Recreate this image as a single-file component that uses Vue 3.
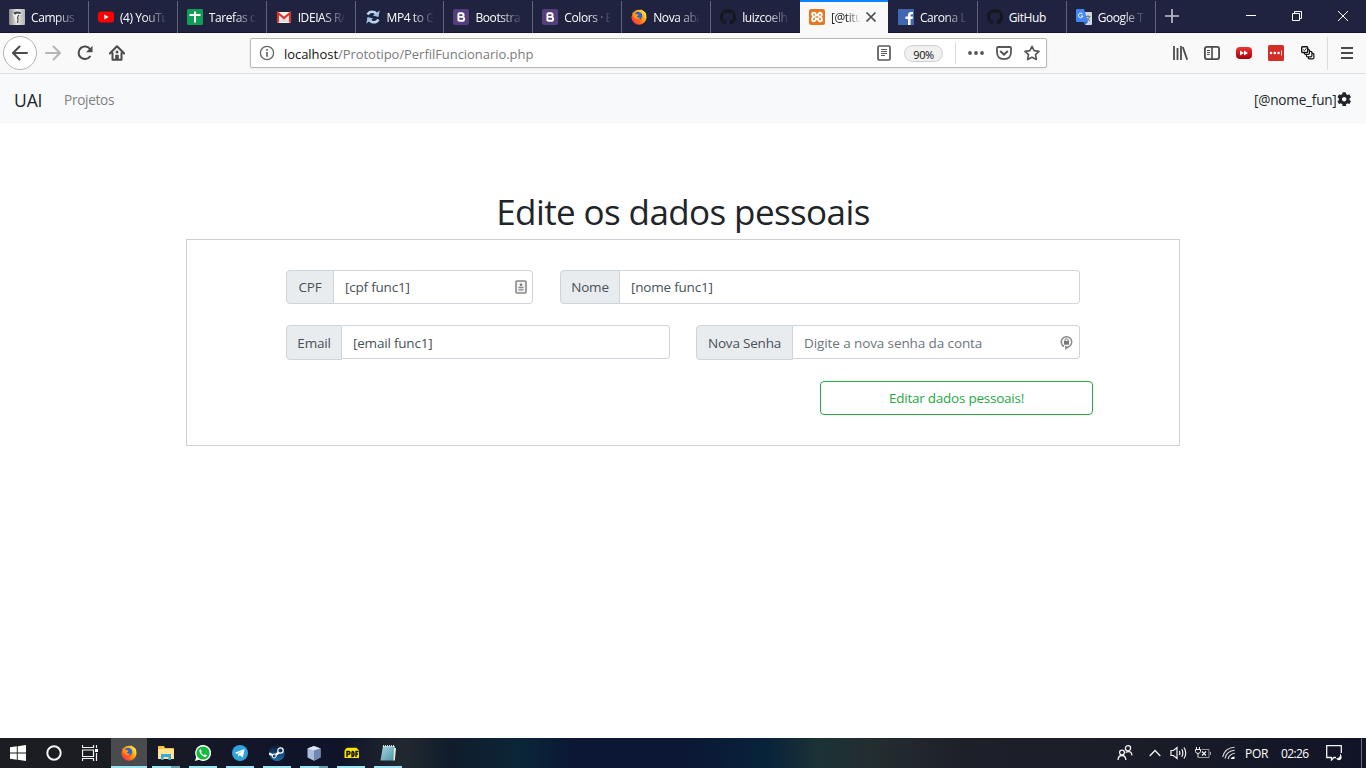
<script setup>
const tabs = [
  { t: 'Campus', i: 'campus' },
  { t: '(4) YouTube', i: 'youtube' },
  { t: 'Tarefas do', i: 'sheet' },
  { t: 'IDEIAS RAP', i: 'gmail' },
  { t: 'MP4 to GIF', i: 'sync' },
  { t: 'Bootstrap', i: 'boot' },
  { t: 'Colors · Bo', i: 'boot' },
  { t: 'Nova aba', i: 'fox' },
  { t: 'luizcoelho', i: 'github' },
  { t: '[@titulo]', i: 'xampp', active: true },
  { t: 'Carona La', i: 'face' },
  { t: 'GitHub', i: 'github', full: true },
  { t: 'Google Tr', i: 'translate' },
]
const apps = ['fox', 'folder', 'whats', 'telegram', 'steam', 'cube', 'pdf', 'note']
</script>

<template>
  <svg class="defs" width="0" height="0" aria-hidden="true">
    <defs>
      <linearGradient id="gFox" x1="1" y1="0" x2="0" y2="1"><stop offset="0" stop-color="#fff04a" /><stop offset=".4" stop-color="#ffab18" /><stop offset=".7" stop-color="#ff5a20" /><stop offset="1" stop-color="#e31587" /></linearGradient>
      <linearGradient id="gGrey" x1="0" y1="0" x2="1" y2="0"><stop offset="0" stop-color="#8a8a8a" /><stop offset=".5" stop-color="#e4e4e4" /><stop offset="1" stop-color="#b5b5b5" /></linearGradient>
      <linearGradient id="gRed" x1="0" y1="0" x2="0" y2="1"><stop offset="0" stop-color="#ee3535" /><stop offset="1" stop-color="#a90009" /></linearGradient>
      <linearGradient id="gSteam" x1="0" y1="0" x2="0" y2="1"><stop offset="0" stop-color="#0a1730" /><stop offset="1" stop-color="#1b6fa8" /></linearGradient>
      <linearGradient id="gNote" x1="0" y1="0" x2="1" y2="1"><stop offset="0" stop-color="#a9dbe6" /><stop offset="1" stop-color="#4c8fa3" /></linearGradient>
      <symbol id="campus" viewBox="0 0 16 16"><rect width="16" height="16" rx="1" fill="url(#gGrey)" /><path d="M4 5Q4 2 8 2 12 2 12.300 4.500L10.500 6.500 9.500 9 8.500 14H7L5.500 9Z" fill="#f2f2f2" /><path d="M4.200 3.800Q8 1.500 12 3.500L11.500 5 8 4.500 6.500 5.500 5 5Z" fill="#444" /><path d="M9.800 6 8.500 8.500 9 10 8.500 14" fill="none" stroke="#444" stroke-width="1.100" /></symbol>
      <symbol id="youtube" viewBox="0 0 16 16"><rect y="2.500" width="16" height="11" rx="3" fill="#f00" /><path d="M6.300 5.500 10.600 8 6.300 10.500Z" fill="#fff" /></symbol>
      <symbol id="sheet" viewBox="0 0 16 16"><rect width="16" height="16" rx="1.200" fill="#0f9d58" /><path d="M2.500 6H13.500M8 2.500V13.500" stroke="#fff" stroke-width="2" /></symbol>
      <symbol id="gmail" viewBox="0 0 16 16"><rect x="1" y="3" width="14" height="11" rx="1" fill="#f1f1f1" /><path d="M2 13 8 8 14 13Z" fill="#dcdcdc" /><path d="M2 13.800V4L8 9 14 4V13.800" fill="none" stroke="#d9372c" stroke-width="2.200" /></symbol>
      <symbol id="sync" viewBox="0 0 16 16"><path d="M2.500 5.500Q5 1.500 9.500 3.200L11.500 5M13.500 10.500Q11 14.500 6.500 12.800L4.500 11" fill="none" stroke="#b7d5ef" stroke-width="2.500" /><path d="M14.700 1.500 13.500 8 7.800 6.500ZM1.300 14.500 2.500 8 8.200 9.500Z" fill="#9fc3e6" /></symbol>
      <symbol id="boot" viewBox="0 0 16 16"><rect width="16" height="16" rx="2" fill="#563d7c" /><path d="M5.400 4.200V11.900M5.400 4.300H8.700Q10.600 4.400 10.600 6 10.600 7.800 8.700 7.900H5.400M8.700 7.900Q11.200 8 11.200 9.900 11.200 11.800 8.700 11.800H5.400" fill="none" stroke="#fff" stroke-width="1.900" /></symbol>
      <symbol id="fox" viewBox="0 0 16 16"><circle cx="8" cy="8.300" r="7.500" fill="url(#gFox)" /><path d="M5 3.500Q8 1.500 10.500 4.500 12.500 8 10 11 6.500 13 4.500 9.500Z" fill="#f7581f" /><path d="M4 4Q8 .8 11 5.200 11.600 9.500 8.500 10 5.300 10 4.800 7Z" fill="#2867cf" /><path d="M1.300 3Q2.500 4.500 4 4.500L7.500 5.400Q7.500 6.600 5.800 7.500 7 9.500 9.500 8.400 8 11 5 9.800 2 8 1.300 3Z" fill="#ff9418" /><path d="M9.500 0Q10 2 12 3.500 15 6 14 10 16.500 6 14.200 3.200 12 2 9.500 0Z" fill="#ffe23a" /></symbol>
      <symbol id="github" viewBox="0 0 16 16"><path fill="#15171f" d="M8 0C3.580 0 0 3.580 0 8c0 3.540 2.290 6.530 5.470 7.590.4.070.55-.17.55-.38 0-.19-.01-.82-.01-1.490-2.010.37-2.530-.49-2.690-.94-.09-.23-.48-.94-.82-1.130-.28-.15-.68-.52-.01-.53.63-.01 1.080.58 1.230.82.72 1.210 1.870.87 2.330.66.07-.52.28-.87.51-1.070-1.780-.2-3.640-.89-3.640-3.950 0-.87.31-1.590.82-2.150-.08-.2-.36-1.020.08-2.120 0 0 .67-.21 2.200.82a7.600 7.600 0 0 1 4 0c1.530-1.040 2.200-.82 2.200-.82.44 1.100.16 1.920.08 2.120.51.56.82 1.270.82 2.150 0 3.070-1.870 3.750-3.650 3.950.29.25.54.73.54 1.480 0 1.070-.01 1.930-.01 2.200 0 .21.15.46.55.38A8 8 0 0 0 16 8c0-4.420-3.580-8-8-8Z" /></symbol>
      <symbol id="xampp" viewBox="0 0 16 16"><rect width="16" height="16" rx="2" fill="#e87722" /><path d="M5.200 3.600Q3 3.600 3.200 5.500 3.300 7 5 7.800 3 8.500 3 10.500 3.200 12.400 5 12.300 6.800 12 6.800 9.800H9.200Q9.200 12.300 11 12.400 13 12.300 13 10.500 13 8.500 11 7.900 13 7 12.900 5.300 12.600 3.600 11 3.700 9.200 4 9.300 6.200H6.700Q6.700 3.700 5.200 3.600Z" fill="none" stroke="#fff" stroke-width="1.900" /></symbol>
      <symbol id="face" viewBox="0 0 16 16"><rect width="16" height="16" fill="#4267b2" /><path d="M10 16V10H7.500V7.500H10V6Q10 3 13 3H15V5.300H13.800Q12.600 5.300 12.600 6.500V7.500H15L14.600 10H12.600V16Z" fill="#fff" /></symbol>
      <symbol id="translate" viewBox="0 0 16 16"><path d="M6 3H15Q16 3 16 4V15Q16 16 15 16H9Z" fill="#d5d8dc" /><path d="M1 0H8L12 13H1Q0 13 0 12V1Q0 0 1 0Z" fill="#4285f4" /><path d="M8 13H12L9 16Z" fill="#3367d6" /><path d="M6.700 5.200A2.300 2.300 0 1 0 7 7H4.900" fill="none" stroke="#fff" /><path d="M9.700 7.500H14.500M12 6V8M13.500 8Q12.500 11 10.500 12M11 9Q12 11 14 12" fill="none" stroke="#607d8b" /></symbol>
      <symbol id="folder" viewBox="0 0 16 16"><path d="M0 1H6L7 3H15Q16 3 16 4V14H0Z" fill="#f5c244" /><path d="M0 4H16V14H0Z" fill="#ffe394" /><path d="M3 15V9H13V15H10.500V12H5.500V15Z" fill="#39a7e2" /></symbol>
      <symbol id="whats" viewBox="0 0 16 16"><path d="M0 16 1.200 11.900A8 8 0 1 1 4 14.800Z" fill="#fff" /><circle cx="8" cy="8" r="6.600" fill="#16bb3e" /><path d="M5.500 4Q3.800 5 4.500 7 6 10.800 9.500 12 11.700 12.200 12 10.200L9.900 9.200 9 10.200Q6.800 9.200 6 7.300L6.800 6.200Z" fill="#fff" /></symbol>
      <symbol id="telegram" viewBox="0 0 16 16"><circle cx="8" cy="8" r="8" fill="#30a3dc" /><path d="M2.800 7.800 12.600 4 10.800 12.400 7.800 10.200 6.200 11.700 6 9.300 10.700 5.500 5 8.900Z" fill="#fff" /></symbol>
      <symbol id="steam" viewBox="0 0 16 16"><circle cx="8" cy="8" r="8" fill="url(#gSteam)" /><path d="M0 8.500 5 10.600M5 11 10 7.500 12 5" fill="none" stroke="#fff" stroke-width="2.300" /><circle cx="11.500" cy="5.500" r="2.700" fill="#153454" stroke="#fff" stroke-width="1.200" /><circle cx="5.200" cy="11" r="2" fill="#244c72" stroke="#fff" /></symbol>
      <symbol id="cube" viewBox="0 0 16 16"><path d="M1.500 3.500 8 1 14.500 3.500V12.500L8 15.800 1.500 12.500Z" fill="#a9bcd8" /><path d="M1.500 3.500 8 5.500 14.500 3.500 8 1Z" fill="#dce8f6" /><path d="M8 5.500 14.500 3.500V12.500L8 15.800Z" fill="#7187b0" /></symbol>
      <symbol id="pdf" viewBox="0 0 16 16"><path d="M1.500 6.500Q2 3 5 2.800H13.500L16 5.500V13H1.500Z" fill="#f6e600" /><path d="M4 12V6.500H5.500Q7 6.500 7 8 7 9.300 5.500 9.300H4M9 6.500V11.500Q11 11.500 11 9 11 6.500 9 6.500M13 12V6.500H15.500M13 9H15" fill="none" stroke="#111" stroke-width="1.400" /></symbol>
      <symbol id="note" viewBox="0 0 16 16"><path d="M3 1H15L14 15.500H.5Z" fill="url(#gNote)" /><path d="M14 3H16L14.800 15.500H13.500Z" fill="#efefd9" /><path d="M3.500 0V2M5.500 0V2M7.500 0V2M9.500 0V2M11.500 0V2M13.500 0V2" stroke="#eee" stroke-width=".9" /></symbol>
    </defs>
  </svg>
  <div class="screen">
    <div class="tabs">
      <div v-for="(tab, n) in tabs" :key="n" class="tab" :class="{ active: tab.active }">
        <svg class="fav"><use :href="'#' + tab.i" /></svg>
        <span class="label" :class="{ full: tab.full, short: tab.active }">{{ tab.t }}</span>
        <svg v-if="tab.active" class="x" viewBox="0 0 12 12"><path d="M1.500 1.500 10.500 10.500M10.500 1.500 1.500 10.500" stroke="#4a4a4a" stroke-width="1.700" /></svg>
      </div>
      <svg class="plus" viewBox="0 0 14 14"><path d="M7 0V14M0 7H14" stroke="#c3c4cc" stroke-width="1.600" /></svg>
      <div class="win">
        <svg viewBox="0 0 12 12"><path d="M1 5.500H11" stroke="#fff" /></svg>
        <svg viewBox="0 0 12 12" fill="none" stroke="#fff"><path d="M1.500 3.500H8.500V10.500H1.500ZM3.500 3.500V1.500H10.500V8.500H8.500" /></svg>
        <svg viewBox="0 0 12 12"><path d="M1 1 11 11M11 1 1 11" stroke="#fff" /></svg>
      </div>
    </div>

    <div class="toolbar">
      <div class="back"><svg viewBox="0 0 16 16"><path d="M15 8H1.500M7.500 1.500 1 8 7.500 14.500" fill="none" stroke="#4a4a4b" stroke-width="2" stroke-linecap="round" stroke-linejoin="round" /></svg></div>
      <svg class="ic" viewBox="0 0 16 16"><path d="M1 8H14.500M8.500 1.500 15 8 8.500 14.500" fill="none" stroke="#b5b5b5" stroke-width="2" stroke-linecap="round" stroke-linejoin="round" /></svg>
      <svg class="ic" viewBox="0 0 16 16"><path d="M13.300 4.500A6.300 6.300 0 1 0 13 11.500" fill="none" stroke="#4a4a4b" stroke-width="2" stroke-linecap="round" /><path d="M15.500.8V7.200H9Z" fill="#4a4a4b" /></svg>
      <svg class="ic" viewBox="0 0 16 16"><path d="M.8 8.500 8 1.300 15.200 8.500M3.500 8V14.800H12.500V8" fill="none" stroke="#4a4a4b" stroke-width="2" stroke-linejoin="round" stroke-linecap="round" /><path d="M6.500 14V10H9.500V14M7 6H9V8H7Z" fill="#4a4a4b" stroke="#4a4a4b" stroke-width=".6" /></svg>
      <div class="url">
        <svg class="info" viewBox="0 0 16 16"><circle cx="8" cy="8" r="6.600" fill="none" stroke="#666" stroke-width="1.300" /><path d="M8 7V11.800M8 4V5.700" stroke="#666" stroke-width="1.700" /></svg>
        <span class="addr">localhost<i>/Prototipo/PerfilFuncionario.php</i></span>
        <svg class="reader" viewBox="0 0 16 16"><rect x="2" y="1" width="12" height="14" rx="1.300" fill="none" stroke="#58585a" stroke-width="1.700" /><path d="M5 4.500H11M5 6.500H11M5 8.500H11M5 10.500H9" stroke="#58585a" /></svg>
        <span class="zoom">90%</span>
        <span class="bar"></span>
        <svg class="ic dots" viewBox="0 0 16 16"><g fill="#58585a"><circle cx="2" cy="8" r="1.900" /><circle cx="8" cy="8" r="1.900" /><circle cx="14" cy="8" r="1.900" /></g></svg>
        <svg class="ic pk" viewBox="0 0 16 16"><path d="M2 2H14Q15 2 15 3V7Q15 14 8 14.200 1 14 1 7V3Q1 2 2 2Z" fill="none" stroke="#58585a" stroke-width="1.800" /><path d="M4.700 6.500 8 9.600 11.300 6.500" fill="none" stroke="#58585a" stroke-width="2" stroke-linecap="round" /></svg>
        <svg class="ic st" viewBox="0 0 16 16"><path d="M8 1.300 10.100 5.600 15 6.300 11.500 9.600 12.400 14.500 8 12.200 3.600 14.500 4.500 9.600 1 6.300 5.900 5.600Z" fill="none" stroke="#58585a" stroke-width="1.700" stroke-linejoin="round" /></svg>
      </div>
      <div class="exts">
        <svg viewBox="0 0 16 16"><path d="M2 1V15M5.500 3V15M9 1V15M10.800 2 15.200 14.700" stroke="#4a4a4b" stroke-width="1.800" /></svg>
        <svg viewBox="0 0 16 16"><rect x=".9" y="1.900" width="14.200" height="12.200" rx="2" fill="none" stroke="#4a4a4b" stroke-width="1.800" /><path d="M8 2V14" stroke="#4a4a4b" stroke-width="1.600" /><path d="M3 5.500H6M3 7.500H6M3 9.500H5.500" stroke="#4a4a4b" /></svg>
        <svg viewBox="0 0 16 16"><rect y="2" width="16" height="12" rx="4" fill="url(#gRed)" /><path d="M4 5.500 8 8 4 10.500ZM8 5.500 12 8 8 10.500Z" fill="#fff" /></svg>
        <svg viewBox="0 0 16 16"><rect width="16" height="16" rx="1.500" fill="#d32d27" /><g fill="#fff"><circle cx="3" cy="8" r="1.300" /><circle cx="6.800" cy="8" r="1.300" /><circle cx="10.600" cy="8" r="1.300" /><path d="M13.200 5.500H14V10.500H13.200Z" /></g></svg>
        <svg viewBox="0 0 16 16" fill="#fff" stroke="#111" stroke-width="1.200"><rect x="8.400" y="8.400" width="5.500" height="5.500" rx="1.200" /><rect x="6.400" y="6.400" width="5.500" height="5.500" rx="1.200" /><rect x="4.400" y="4.400" width="5" height="5" rx="1.200" /><rect x="1.700" y="1.700" width="6" height="5.800" rx="1" stroke-width="1.400" /><path d="M3.200 4.500 4.400 5.700 6.500 3.300" fill="none" stroke-width="1" /></svg>
      </div>
      <span class="bar2"></span>
      <svg class="menu" viewBox="0 0 12 12"><path d="M0 1H12M0 6H12M0 11H12" stroke="#4a4a4b" stroke-width="1.800" /></svg>
    </div>

    <nav class="nav">
      <span class="brand">UAI</span>
      <span class="link">Projetos</span>
      <span class="user">[@nome_fun]</span>
      <svg class="gear" viewBox="0 0 512 512"><path fill="#212529" d="M487.400 315.700l-42.600-24.600c4.300-23.200 4.300-47 0-70.200l42.600-24.600c4.900-2.800 7.100-8.600 5.500-14-11.100-35.600-30-67.800-54.700-94.600-3.800-4.100-10-5.100-14.800-2.300L380.800 110c-17.900-15.400-38.500-27.300-60.800-35.100V25.800c0-5.600-3.900-10.500-9.400-11.700-36.700-8.200-74.300-7.800-109.200 0-5.500 1.200-9.400 6.100-9.400 11.700V75c-22.200 7.900-42.800 19.800-60.800 35.100L88.700 85.500c-4.900-2.800-11-1.900-14.800 2.300-24.700 26.700-43.600 58.900-54.700 94.600-1.700 5.400.6 11.200 5.500 14L67.300 221c-4.300 23.200-4.300 47 0 70.200l-42.600 24.600c-4.900 2.800-7.100 8.600-5.500 14 11.100 35.600 30 67.800 54.700 94.600 3.800 4.100 10 5.100 14.800 2.300l42.600-24.600c17.900 15.400 38.500 27.300 60.800 35.100v49.200c0 5.600 3.900 10.500 9.400 11.700 36.700 8.200 74.300 7.800 109.200 0 5.500-1.200 9.400-6.100 9.400-11.700v-49.200c22.200-7.900 42.800-19.800 60.800-35.100l42.600 24.600c4.900 2.800 11 1.900 14.800-2.300 24.700-26.700 43.600-58.900 54.700-94.600 1.500-5.500-.7-11.300-5.600-14.100zM256 336c-44.100 0-80-35.900-80-80s35.900-80 80-80 80 35.900 80 80-35.900 80-80 80z" /></svg>
    </nav>

    <main>
      <h1>Edite os dados pessoais</h1>
      <form class="card" @submit.prevent>
        <div class="row">
          <div class="group cpf"><label>CPF</label><div class="field"><span>[cpf func1]</span>
            <svg class="fill" viewBox="0 0 12 14"><rect x="1" y="1" width="10" height="12" rx="1" fill="#f3f3f3" stroke="#888" stroke-width="1.600" /><circle cx="6" cy="4.700" r="1.300" fill="#777" /><path d="M3.500 7.500H8.500M3.500 9.800H8.500" stroke="#888" stroke-width="1.300" /></svg></div></div>
          <div class="group nome"><label>Nome</label><div class="field"><span>[nome func1]</span></div></div>
        </div>
        <div class="row second">
          <div class="group email"><label>Email</label><div class="field"><span>[email func1]</span></div></div>
          <div class="group senha"><label>Nova Senha</label><div class="field"><span class="ph">Digite a nova senha da conta</span>
            <svg class="lock" viewBox="0 0 13 15"><path d="M4 11.500A5.200 5.200 0 1 1 9.500 11.200L6.500 13" fill="none" stroke="#888" stroke-width="1.500" /><path d="M5 10.500 8.500 12.500 5.200 15Z" fill="#888" /><rect x="4" y="6" width="5" height="3.700" fill="#777" /><path d="M5 6V5Q5 3.800 6.500 3.800 8 3.800 8 5V6" fill="none" stroke="#777" /></svg></div></div>
        </div>
        <button class="send" type="button"><span>Editar dados pessoais!</span></button>
      </form>
    </main>

    <footer class="taskbar">
      <div class="sys"><svg viewBox="0 0 16 16"><path d="M0 2.300 6.800 1.300V7.500H0ZM7.700 1.200 16 0V7.500H7.700ZM0 8.500H6.800V14.700L0 13.700ZM7.700 8.500H16V16L7.700 14.800Z" fill="#fff" /></svg></div>
      <div class="sys"><svg viewBox="0 0 16 16"><circle cx="8" cy="8" r="6.700" fill="none" stroke="#f2f2f2" stroke-width="2" /></svg></div>
      <div class="sys"><svg viewBox="0 0 16 16" fill="none" stroke="#f2f2f2"><path d="M.5 0V2.500H11.500V0M.5 16V13.500H11.500V16M.5 5H11.500V11.500H.5ZM14.500 0V3M14.500 8V16" stroke-width="1.200" /><path d="M13 4H16V7H13Z" fill="#fff" stroke="none" /></svg></div>
      <div class="apps">
        <div v-for="a in apps" :key="a" class="app" :class="a"><svg><use :href="'#' + a" /></svg></div>
      </div>
      <div class="tray">
        <svg class="people" viewBox="0 0 16 16" fill="none" stroke="#f2f2f2" stroke-width="1.300"><circle cx="11" cy="3.300" r="2.600" /><circle cx="5" cy="7.500" r="2.400" /><path d="M1 15Q1.300 10.500 5 10.500 8.500 10.500 8.900 15M8.500 7.300Q14.500 5 15 10.500" /></svg>
        <svg class="chev" viewBox="0 0 12 8"><path d="M.7 7 6 1.500 11.300 7" fill="none" stroke="#f2f2f2" stroke-width="1.300" /></svg>
        <svg class="vol" viewBox="0 0 17 16" fill="none" stroke="#f2f2f2" stroke-width="1.200"><path d="M1 5.500H3.500L7 2.500V13.500L3.500 10.500H1ZM9.300 6Q10.500 8 9.300 10M11.700 4.300Q14 8 11.700 11.700M14 2.500Q17.500 8 14 13.500" /></svg>
        <svg class="bat" viewBox="0 0 16 12" fill="none" stroke="#f2f2f2"><path d="M1.500 0V2.500M4.500 0V2.500M.5 2.500H5.500V4.500Q5 6.500 3 6.500 1 6.500 .5 4.500ZM3 6.500V10.500" /><path d="M3 10.500H14V2.500H6.500M15.500 5V8" stroke="#999" /><path d="M7 4.500 11 8.500M11 4.500 7 8.500" stroke-width="1.200" /></svg>
        <svg class="wifi" viewBox="0 0 14 14" fill="none" stroke="#ddd" stroke-width="1.100"><path d="M.7 11Q2.500 2 12.500 1.200M3 12.500Q4.500 5 12.700 4.300M6 13Q7.300 8 12.800 7.300" /><path d="M8.500 13Q9.300 10.700 12.500 10.400L12.500 13Z" fill="#fff" stroke="none" /></svg>
        <span class="lang">POR</span>
        <span class="time">02:26</span>
        <svg class="act" viewBox="0 0 17 16"><path d="M10 12.500H8L5.500 15V12.500H.7V.7H15.300V8" fill="none" stroke="#f2f2f2" stroke-width="1.300" /><path d="M14 8.300Q15 13 10 13.500 12 16 14.500 14.800 17 12.500 14 8.300Z" fill="#fff" /></svg>
        <span class="edge"></span>
      </div>
    </footer>
  </div>
</template>

<style>
html, body { margin: 0; overflow: hidden; }
</style>

<style scoped>
.defs { position: absolute; }
.screen { width: 1366px; height: 768px; display: flex; flex-direction: column; background: #fff; font-family: "Open Sans", "Noto Sans", sans-serif; overflow: hidden; color: #212529; }
svg { flex: none; display: block; }
span, label, h1 { white-space: nowrap; }
.tabs { height: 33px; flex: none; background: #202340; display: flex; align-items: center; box-shadow: inset 0 -1px #14162c; }
.tab { box-sizing: border-box; width: 88.9px; height: 32px; flex: none; border-right: 1px solid #62647a; display: flex; align-items: center; padding-left: 9px; color: #fff; font-size: 12px; }
.tab:nth-child(9) { border-right-color: transparent; }
.tab.active { width: 88px; margin-right: .9px; height: 33px; background: #f9f9fa; color: #222; border-right: 0; box-shadow: inset 0 2px #0a84ff; }
.fav { width: 16px; height: 16px; margin-top: 1px; }
.label { margin-left: 6px; width: 46px; overflow: hidden; letter-spacing: -.42px; line-height: 20px; padding-top: 2px; -webkit-mask-image: linear-gradient(90deg, #000 52%, transparent 104%); mask-image: linear-gradient(90deg, #000 52%, transparent 104%); }
.label.full { -webkit-mask-image: none; mask-image: none; }
.label.short { width: 29px; }
.x { width: 12px; height: 12px; margin-left: 5px; margin-top: 1px; }
.plus { width: 14px; height: 14px; margin-left: 9px; margin-top: -1px; }
.win { margin-left: auto; display: flex; gap: 34px; margin-right: 17px; margin-top: -1px; }
.win svg { width: 12px; height: 12px; }

.toolbar { height: 40px; flex: none; background: #f9f9fa; border-bottom: 1px solid #dedee0; display: flex; align-items: center; padding-left: 3px; }
.back { width: 32px; height: 32px; border: 1px solid #b4b4b5; border-radius: 50%; background: #fff; display: flex; align-items: center; justify-content: center; margin-right: 8px; }
.back svg, .ic { width: 16px; height: 16px; }
.toolbar > .ic + .ic { margin-left: 16px; }
.url { box-sizing: border-box; margin-left: 125px; width: 797px; height: 30px; border: 1px solid #b8b8ba; border-radius: 2px; background: #fff; box-shadow: 0 1px 3px rgba(0,0,0,.07); display: flex; align-items: center; padding-left: 8px; }
.info { width: 16px; height: 16px; }
.addr { margin-left: 9px; font-size: 13px; letter-spacing: -.05px; color: #111; width: 592px; padding-top: 2px; }
.addr i { font-style: normal; color: #7b7b7d; }
.reader { width: 16px; height: 16px; }
.zoom { box-sizing: border-box; margin-left: 12px; width: 39px; height: 17px; border: 1px solid #cfcfd1; border-radius: 9px; background: #f0f0f1; font-size: 11px; letter-spacing: -.4px; line-height: 17px; text-align: center; color: #111; }
.bar { width: 1px; height: 22px; background: #dcdcde; margin-left: 12px; }
.dots { margin-left: 12px; }
.pk, .st { margin-left: 12px; }
.exts { margin-left: 125px; display: flex; gap: 16px; }
.exts svg { width: 16px; height: 16px; }
.bar2 { width: 1px; height: 33px; background: #dcdcde; margin-left: 11px; }
.menu { width: 12px; height: 12px; margin-left: 13px; }

.nav { height: 50px; flex: none; background: #f8f9fa; display: flex; align-items: center; padding: 0 15px 0 14px; font-size: 14px; }
.brand { font-size: 17.500px; letter-spacing: -.1px; width: 50px; padding-top: 1px; }
.link { color: #7f8081; font-size: 13.600px; letter-spacing: -.3px; padding-top: 1px; }
.user { margin-left: auto; font-size: 13.600px; letter-spacing: -.22px; padding-top: 1px; }
.gear { width: 14.400px; height: 14.400px; }

main { flex: 1; }
h1 { margin: 65px 0 0; height: 50px; line-height: 46px; text-align: center; font-weight: 400; font-size: 35px; letter-spacing: -.6px; }
.card { box-sizing: border-box; width: 994px; height: 207px; margin: 0 auto; border: 1px solid #ced0d2; padding: 30px 86px 0 99px; display: flex; flex-direction: column; }
.row { display: flex; justify-content: space-between; width: 794px; }
.second { margin-top: 21px; }
.group { display: flex; font-size: 13.500px; color: #495057; align-items: flex-start; }
label { box-sizing: border-box; height: 34px; line-height: 32px; border: 1px solid #ced4da; border-radius: 4px 0 0 4px; background: #e9ecef; text-align: center; letter-spacing: -.2px; flex: none; }
.second label { height: 35px; line-height: 34px; }
.field { box-sizing: border-box; flex: 1; height: 34px; line-height: 32px; border: 1px solid #ced4da; border-left: 0; border-radius: 0 4px 4px 0; padding: 0 5px 0 11px; display: flex; align-items: center; justify-content: space-between; letter-spacing: -.2px; }
.second .field > span { padding-top: 2px; }
.cpf { width: 247px; } .cpf label { width: 48px; }
.nome { width: 520px; } .nome label { width: 60px; }
.email { width: 384px; } .email label { width: 56px; }
.senha { width: 384px; } .senha label { width: 97px; }
.second .field .ph { color: #6c757d; letter-spacing: -.1px; }
.fill { width: 12px; height: 14px; }
.lock { width: 13px; height: 15px; margin-right: 1px; }
.send { box-sizing: border-box; width: 273px; height: 34px; margin: 21px 0 0; align-self: flex-end; border: 1px solid #28a745; border-radius: 4px; background: #fff; color: #28a745; font: 13.500px/32px "Open Sans", "Noto Sans", sans-serif; letter-spacing: -.24px; padding: 0; }
.send span { display: block; padding-top: 1px; line-height: 31px; }

.taskbar { height: 30px; flex: none; display: flex; background: linear-gradient(90deg, #1b1d22 0, #1b1d22 6%, #10142a 22%, #10142a 25%, #22282f 29.500%, #101c2c 33%, #0a2638 38%, #0b1735 42%, #0b1735 50%, #07233a 56%, #1c3235 60%, #232d30 64%, #1d1f29 71%, #1b1d28 82%, #101426 100%); }
.sys { width: 36px; display: flex; align-items: center; justify-content: center; }
.sys svg { width: 16px; height: 16px; }
.apps { display: flex; gap: 9px; margin-left: 3px; }
.app { width: 28px; display: flex; align-items: center; justify-content: center; border-bottom: 2px solid #9be4f2; height: 28px; }
.app svg { width: 16px; height: 16px; margin-top: 2px; }
.app.fox { width: 36px; background: #4a4b4e; margin-right: -4px; }
.app.folder, .app.cube { border-image: linear-gradient(90deg, #9be4f2 68%, #6f9fae 68%) 1; border-width: 0 0 2px; border-style: solid; }
.tray { margin-left: auto; display: flex; align-items: center; color: #fff; font-size: 12px; }
.people { width: 16px; height: 16px; }
.chev { width: 12px; height: 8px; margin-left: 16px; }
.vol { width: 17px; height: 16px; margin-left: 9px; }
.bat { width: 16px; height: 12px; margin-left: 8px; }
.wifi { width: 14px; height: 14px; margin-left: 11px; }
.lang { margin-left: 9px; width: 36px; letter-spacing: -.3px; }
.time { width: 45px; letter-spacing: -.6px; }
.act { width: 17px; height: 16px; }
.edge { width: 1px; height: 30px; background: #6a6c75; margin-left: 18px; margin-right: 4px; }
</style>
